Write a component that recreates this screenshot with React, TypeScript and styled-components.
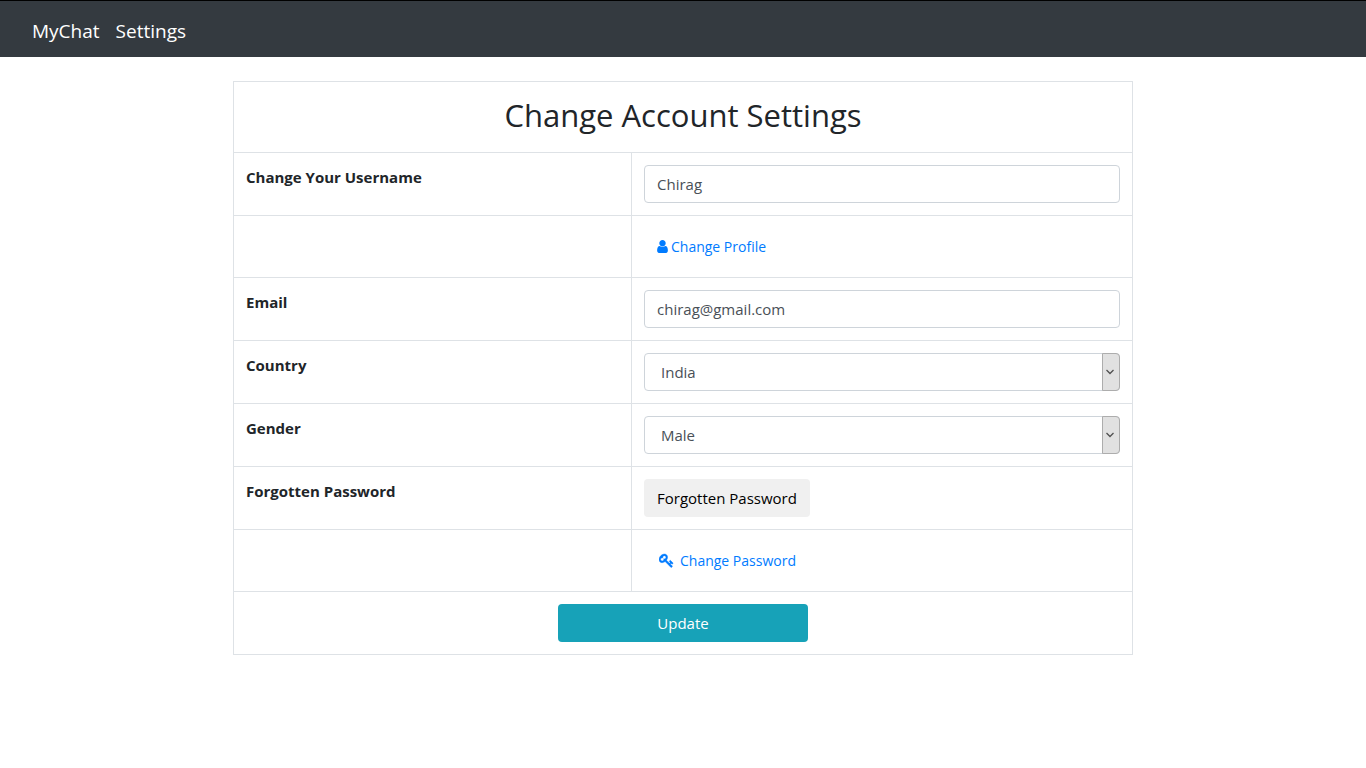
import React from "react";
import styled, { createGlobalStyle } from "styled-components";

const GlobalStyle = createGlobalStyle`
  *, *::before, *::after { box-sizing: border-box; }
  body {
    margin: 0;
    background: #fff;
    color: #212529;
    font-family: "Segoe UI", "Open Sans", "Noto Sans", sans-serif;
    font-size: 15px;
    line-height: 24px;
  }
  button, input, select { font: inherit; margin: 0; }
`;

const Navbar = styled.nav`
  display: flex;
  align-items: center;
  gap: 16px;
  padding: 14px 32px 10px;
  border-top: 1px solid #000;
  background: #343a40;
`;

const NavLink = styled.a`
  color: #fff;
  font-size: 19px;
  line-height: 32px;
  text-decoration: none;
`;

const Main = styled.main`
  padding: 24px 16px;
`;

const Form = styled.form`
  max-width: 900px;
  margin: 0 auto;
`;

const Table = styled.table`
  width: 100%;
  border-collapse: collapse;
  table-layout: fixed;
`;

const LabelColumn = styled.col`
  width: 398px;
`;

const Cell = styled.td<{ $center?: boolean }>`
  padding: 12px;
  border: 1px solid #dee2e6;
  vertical-align: top;
  text-align: ${(p) => (p.$center ? "center" : "left")};
`;

const HeadCell = styled(Cell).attrs({ as: "th" })`
  font-weight: 400;
`;

const Title = styled.h2`
  margin: 0 0 4px;
  font-size: 31px;
  font-weight: 400;
  line-height: 42px;
`;

const Label = styled.label`
  font-weight: 700;
`;

const Input = styled.input`
  display: block;
  width: 100%;
  height: 38px;
  padding: 6px 12px;
  border: 1px solid #ced4da;
  border-radius: 4px;
  background: #fff;
  color: #495057;
`;

const SelectBox = styled.div`
  position: relative;
`;

const Select = styled.select`
  display: block;
  width: 100%;
  height: 38px;
  padding: 6px 32px 6px 16px;
  border: 1px solid #ced4da;
  border-radius: 4px;
  appearance: none;
  background: #fff;
  color: #495057;
`;

const SelectArrow = styled.span`
  position: absolute;
  top: 0;
  right: 0;
  bottom: 0;
  display: flex;
  align-items: center;
  justify-content: center;
  width: 18px;
  padding-right: 2px;
  border: 1px solid #adadad;
  border-radius: 0 4px 4px 0;
  background: #e1e1e1;
  pointer-events: none;
`;

const Button = styled.button<{ $primary?: boolean }>`
  display: inline-block;
  width: ${(p) => (p.$primary ? "250px" : "auto")};
  height: 38px;
  padding: 6px 12px;
  border: 1px solid transparent;
  border-radius: 4px;
  background-color: ${(p) => (p.$primary ? "#17a2b8" : "#f0f0f0")};
  color: ${(p) => (p.$primary ? "#fff" : "#000")};
  vertical-align: top;
  cursor: pointer;
`;

const ActionLink = styled.a<{ $gap: number }>`
  display: flex;
  align-items: center;
  gap: ${(p) => p.$gap}px;
  width: fit-content;
  padding: 6px 12px;
  border: 1px solid transparent;
  color: #007bff;
  font-size: 14px;
  line-height: 23px;
  text-decoration: none;
`;

const Icon = styled.svg`
  display: block;
  fill: currentColor;
`;

const KeySlot = styled.span`
  display: flex;
  justify-content: center;
  width: 19px;
`;

const UserIcon = () => (
  <Icon width="11" height="15" viewBox="256 0 1280 1792" aria-hidden="true">
    <path d="M1536 1399q0 109-62.5 187t-150.5 78h-854q-88 0-150.5-78t-62.5-187q0-85 8.5-160.5t31.5-152 58.5-131 94-89 134.5-34.5q131 128 313 128t313-128q76 0 134.5 34.5t94 89 58.5 131 31.5 152 8.5 160.5zm-256-887q0 159-112.5 271.5t-271.5 112.5-271.5-112.5-112.5-271.5 112.5-271.5 271.5-112.5 271.5 112.5 112.5 271.5z" />
  </Icon>
);

const KeyIcon = () => (
  <KeySlot>
    <Icon width="15" height="15" viewBox="0 0 1792 1792" aria-hidden="true">
      <path
        stroke="currentColor"
        strokeWidth="50"
        d="M832 512q0-80-56-136t-136-56-136 56-56 136q0 42 19 83-41-19-83-19-80 0-136 56t-56 136 56 136 136 56 136-56 56-136q0-42-19-83 41 19 83 19 80 0 136-56t56-136zm851 704q0 17-49 66t-66 49q-9 0-28.5-16t-36.5-33-38.5-40-24.5-26l-96 96 220 220q28 28 28 68 0 42-39 81t-81 39q-40 0-68-28l-671-671q-176 131-365 131-163 0-265.5-102.5t-102.5-265.5q0-160 95-313t248-248 313-95q163 0 265.5 102.5t102.5 265.5q0 189-131 365l355 355 96-96q-3-3-26-24.5t-40-38.5-33-36.5-16-28.5q0-17 49-66t66-49q13 0 23 10 6 6 46 44.5t82 79.5 86.5 86 73 78 28.5 41z"
      />
    </Icon>
  </KeySlot>
);

type SelectFieldProps = { id: string; initial: string; options: string[] };

const SelectField = ({ id, initial, options }: SelectFieldProps) => (
  <SelectBox>
    <Select id={id} name={id} defaultValue={initial}>
      {options.map((option) => (
        <option key={option}>{option}</option>
      ))}
    </Select>
    <SelectArrow>
      <svg width="8" height="6" viewBox="0 0 8 6" fill="none" stroke="#505050" aria-hidden="true">
        <path d="M0.5 1 L4 4.5 L7.5 1" strokeWidth="1.3" />
      </svg>
    </SelectArrow>
  </SelectBox>
);

export default function App() {
  return (
    <>
      <GlobalStyle />
      <Navbar>
        <NavLink href="#home">MyChat</NavLink>
        <NavLink href="#settings">Settings</NavLink>
      </Navbar>
      <Main>
        <Form onSubmit={(event) => event.preventDefault()}>
          <Table>
            <colgroup>
              <LabelColumn />
              <col />
            </colgroup>
            <tbody>
              <tr>
                <HeadCell colSpan={2} $center>
                  <Title>Change Account Settings</Title>
                </HeadCell>
              </tr>
              <tr>
                <Cell>
                  <Label htmlFor="username">Change Your Username</Label>
                </Cell>
                <Cell>
                  <Input id="username" name="username" type="text" defaultValue="Chirag" />
                </Cell>
              </tr>
              <tr>
                <Cell />
                <Cell>
                  <ActionLink href="#profile" $gap={3}>
                    <UserIcon />
                    Change Profile
                  </ActionLink>
                </Cell>
              </tr>
              <tr>
                <Cell>
                  <Label htmlFor="email">Email</Label>
                </Cell>
                <Cell>
                  <Input id="email" name="email" type="email" defaultValue="chirag@gmail.com" />
                </Cell>
              </tr>
              <tr>
                <Cell>
                  <Label htmlFor="country">Country</Label>
                </Cell>
                <Cell>
                  <SelectField id="country" initial="India" options={["India"]} />
                </Cell>
              </tr>
              <tr>
                <Cell>
                  <Label htmlFor="gender">Gender</Label>
                </Cell>
                <Cell>
                  <SelectField id="gender" initial="Male" options={["Male", "Female"]} />
                </Cell>
              </tr>
              <tr>
                <Cell>
                  <Label htmlFor="forgotten">Forgotten Password</Label>
                </Cell>
                <Cell>
                  <Button id="forgotten" type="button">
                    Forgotten Password
                  </Button>
                </Cell>
              </tr>
              <tr>
                <Cell />
                <Cell>
                  <ActionLink href="#password" $gap={4}>
                    <KeyIcon />
                    Change Password
                  </ActionLink>
                </Cell>
              </tr>
              <tr>
                <Cell colSpan={2} $center>
                  <Button type="submit" $primary>
                    Update
                  </Button>
                </Cell>
              </tr>
            </tbody>
          </Table>
        </Form>
      </Main>
    </>
  );
}
